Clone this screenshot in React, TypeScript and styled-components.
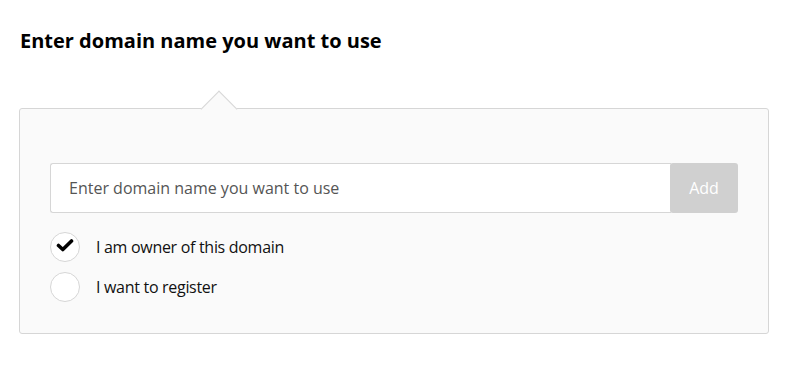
import React, { useState } from "react";
import styled, { createGlobalStyle } from "styled-components";

const Global = createGlobalStyle`
  html, body { margin: 0; padding: 0; background: #ffffff; }
  body { font-family: "Open Sans", "Noto Sans", sans-serif; color: #111; }
`;

const Page = styled.div`
  padding: 26px 0 0 19px;
  width: 750px;
`;

const Title = styled.h2`
  margin: 0 0 0 1px;
  font-size: 20px;
  line-height: 30px;
  font-weight: 700;
  color: #000;
`;

const Panel = styled.div`
  position: relative;
  margin-top: 52px;
  box-sizing: border-box;
  height: 226px;
  border: 1px solid #d6d6d6;
  border-radius: 3px;
  background: #fafafa;
  padding: 54px 30px 0 30px;
`;

const Arrow = styled.div`
  position: absolute;
  top: -13px;
  left: 186px;
  width: 25px;
  height: 25px;
  background: #fafafa;
  border-left: 1px solid #d6d6d6;
  border-top: 1px solid #d6d6d6;
  transform: rotate(45deg);
`;

const InputRow = styled.div`
  display: flex;
  height: 50px;
`;

const Input = styled.input`
  flex: 1;
  box-sizing: border-box;
  height: 50px;
  border: 1px solid #d6d6d6;
  border-right: none;
  border-radius: 3px 0 0 3px;
  padding: 0 18px;
  font-family: "Open Sans", sans-serif;
  font-size: 16px;
  color: #333;
  background: #fff;
  outline: none;
  &::placeholder { color: #555; }
`;

const AddButton = styled.button`
  width: 68px;
  height: 50px;
  border: none;
  border-radius: 3px;
  margin-left: -1px;
  background: #d0d0d0;
  color: #fff;
  font-family: "Open Sans", sans-serif;
  font-size: 16px;
  padding: 0;
  cursor: pointer;
`;

const Options = styled.div`
  display: flex;
  flex-direction: column;
  gap: 10px;
  margin-top: 19px;
`;

const Option = styled.label`
  display: flex;
  align-items: center;
  gap: 16px;
  cursor: pointer;
  font-size: 16px;
  letter-spacing: -0.3px;
  color: #111;
`;

const Circle = styled.span`
  width: 30px;
  height: 30px;
  box-sizing: border-box;
  border: 1px solid #d6d6d6;
  border-radius: 50%;
  background: #fff;
  display: flex;
  align-items: center;
  justify-content: center;
  padding-bottom: 3px;
`;

const Check = () => (
  <svg width="18" height="13" viewBox="0 0 18 13">
    <path d="M2.5 6.5 L6.8 10.5 L15.5 2" fill="none" stroke="#000" strokeWidth="3.6" strokeLinecap="round" strokeLinejoin="round" />
  </svg>
);

export default function App() {
  const [choice, setChoice] = useState(0);
  const opts = ["I am owner of this domain", "I want to register"];
  return (
    <>
      <Global />
      <Page>
        <Title>Enter domain name you want to use</Title>
        <Panel>
          <Arrow />
          <InputRow>
            <Input placeholder="Enter domain name you want to use" />
            <AddButton>Add</AddButton>
          </InputRow>
          <Options>
            {opts.map((o, i) => (
              <Option key={o} onClick={() => setChoice(i)}>
                <Circle>{choice === i && <Check />}</Circle>
                {o}
              </Option>
            ))}
          </Options>
        </Panel>
      </Page>
    </>
  );
}
